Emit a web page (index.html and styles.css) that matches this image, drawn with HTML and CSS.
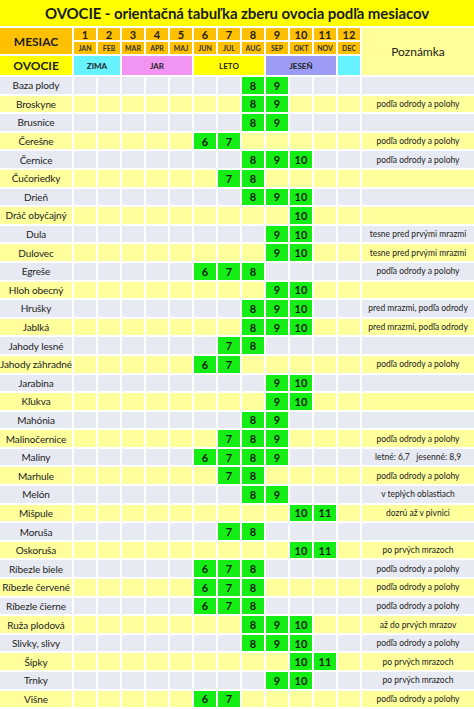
FILE: index.html
```html
<!DOCTYPE html>
<html lang="sk">
<head>
<meta charset="utf-8">
<title>Ovocie - tabuľka zberu</title>
<link rel="stylesheet" href="styles.css">
</head>
<body>
<div class="page">
  <h1 class="title">OVOCIE - orientačná tabuľka zberu ovocia podľa mesiacov</h1>
  <div class="head">
    <div class="mesiac">MESIAC</div>
    <div class="num">1</div><div class="num">2</div><div class="num">3</div><div class="num">4</div><div class="num">5</div><div class="num">6</div><div class="num">7</div><div class="num">8</div><div class="num">9</div><div class="num">10</div><div class="num">11</div><div class="num">12</div>
    <div class="pozn">Poznámka</div>
    <div class="abbr">JAN</div><div class="abbr">FEB</div><div class="abbr">MAR</div><div class="abbr">APR</div><div class="abbr">MAJ</div><div class="abbr">JUN</div><div class="abbr">JUL</div><div class="abbr">AUG</div><div class="abbr">SEP</div><div class="abbr">OKT</div><div class="abbr">NOV</div><div class="abbr">DEC</div>
    <div class="ovocie">OVOCIE</div>
    <div class="season zima">ZIMA</div>
    <div class="season jar">JAR</div>
    <div class="season leto">LETO</div>
    <div class="season jesen">JESEŇ</div>
    <div class="season dec"></div>
  </div>
  <div class="body">
    <div class="row"><span class="name">Baza plody</span><i></i><i></i><i></i><i></i><i></i><i></i><i></i><b>8</b><b>9</b><i></i><i></i><i></i><span class="note"></span></div>
    <div class="row"><span class="name">Broskyne</span><i></i><i></i><i></i><i></i><i></i><i></i><i></i><b>8</b><b>9</b><i></i><i></i><i></i><span class="note">podľa odrody a polohy</span></div>
    <div class="row"><span class="name">Brusnice</span><i></i><i></i><i></i><i></i><i></i><i></i><i></i><b>8</b><b>9</b><i></i><i></i><i></i><span class="note"></span></div>
    <div class="row"><span class="name">Čerešne</span><i></i><i></i><i></i><i></i><i></i><b>6</b><b>7</b><i></i><i></i><i></i><i></i><i></i><span class="note">podľa odrody a polohy</span></div>
    <div class="row"><span class="name">Černice</span><i></i><i></i><i></i><i></i><i></i><i></i><i></i><b>8</b><b>9</b><b>10</b><i></i><i></i><span class="note">podľa odrody a polohy</span></div>
    <div class="row"><span class="name">Čučoriedky</span><i></i><i></i><i></i><i></i><i></i><i></i><b>7</b><b>8</b><i></i><i></i><i></i><i></i><span class="note"></span></div>
    <div class="row"><span class="name">Drieň</span><i></i><i></i><i></i><i></i><i></i><i></i><i></i><b>8</b><b>9</b><b>10</b><i></i><i></i><span class="note"></span></div>
    <div class="row"><span class="name">Dráč obyčajný</span><i></i><i></i><i></i><i></i><i></i><i></i><i></i><i></i><i></i><b>10</b><i></i><i></i><span class="note"></span></div>
    <div class="row"><span class="name">Dula</span><i></i><i></i><i></i><i></i><i></i><i></i><i></i><i></i><b>9</b><b>10</b><i></i><i></i><span class="note">tesne pred prvými mrazmi</span></div>
    <div class="row"><span class="name">Dulovec</span><i></i><i></i><i></i><i></i><i></i><i></i><i></i><i></i><b>9</b><b>10</b><i></i><i></i><span class="note">tesne pred prvými mrazmi</span></div>
    <div class="row"><span class="name">Egreše</span><i></i><i></i><i></i><i></i><i></i><b>6</b><b>7</b><b>8</b><i></i><i></i><i></i><i></i><span class="note">podľa odrody a polohy</span></div>
    <div class="row"><span class="name">Hloh obecný</span><i></i><i></i><i></i><i></i><i></i><i></i><i></i><i></i><b>9</b><b>10</b><i></i><i></i><span class="note"></span></div>
    <div class="row"><span class="name">Hrušky</span><i></i><i></i><i></i><i></i><i></i><i></i><i></i><b>8</b><b>9</b><b>10</b><i></i><i></i><span class="note">pred mrazmi, podľa odrody</span></div>
    <div class="row"><span class="name">Jablká</span><i></i><i></i><i></i><i></i><i></i><i></i><i></i><b>8</b><b>9</b><b>10</b><i></i><i></i><span class="note">pred mrazmi, podľa odrody</span></div>
    <div class="row"><span class="name">Jahody lesné</span><i></i><i></i><i></i><i></i><i></i><i></i><b>7</b><b>8</b><i></i><i></i><i></i><i></i><span class="note"></span></div>
    <div class="row"><span class="name">Jahody záhradné</span><i></i><i></i><i></i><i></i><i></i><b>6</b><b>7</b><i></i><i></i><i></i><i></i><i></i><span class="note">podľa odrody a polohy</span></div>
    <div class="row"><span class="name">Jarabina</span><i></i><i></i><i></i><i></i><i></i><i></i><i></i><i></i><b>9</b><b>10</b><i></i><i></i><span class="note"></span></div>
    <div class="row"><span class="name">Kľukva</span><i></i><i></i><i></i><i></i><i></i><i></i><i></i><i></i><b>9</b><b>10</b><i></i><i></i><span class="note"></span></div>
    <div class="row"><span class="name">Mahónia</span><i></i><i></i><i></i><i></i><i></i><i></i><i></i><b>8</b><b>9</b><i></i><i></i><i></i><span class="note"></span></div>
    <div class="row"><span class="name">Malinočernice</span><i></i><i></i><i></i><i></i><i></i><i></i><b>7</b><b>8</b><b>9</b><i></i><i></i><i></i><span class="note">podľa odrody a polohy</span></div>
    <div class="row"><span class="name">Maliny</span><i></i><i></i><i></i><i></i><i></i><b>6</b><b>7</b><b>8</b><b>9</b><i></i><i></i><i></i><span class="note">letné: 6,7   jesenné: 8,9</span></div>
    <div class="row"><span class="name">Marhule</span><i></i><i></i><i></i><i></i><i></i><i></i><b>7</b><b>8</b><i></i><i></i><i></i><i></i><span class="note">podľa odrody a polohy</span></div>
    <div class="row"><span class="name">Melón</span><i></i><i></i><i></i><i></i><i></i><i></i><i></i><b>8</b><b>9</b><i></i><i></i><i></i><span class="note">v teplých oblastiach</span></div>
    <div class="row"><span class="name">Mišpule</span><i></i><i></i><i></i><i></i><i></i><i></i><i></i><i></i><i></i><b>10</b><b>11</b><i></i><span class="note">dozrú až v pivnici</span></div>
    <div class="row"><span class="name">Moruša</span><i></i><i></i><i></i><i></i><i></i><i></i><b>7</b><b>8</b><i></i><i></i><i></i><i></i><span class="note"></span></div>
    <div class="row"><span class="name">Oskoruša</span><i></i><i></i><i></i><i></i><i></i><i></i><i></i><i></i><i></i><b>10</b><b>11</b><i></i><span class="note">po prvých mrazoch</span></div>
    <div class="row"><span class="name">Ríbezle biele</span><i></i><i></i><i></i><i></i><i></i><b>6</b><b>7</b><b>8</b><i></i><i></i><i></i><i></i><span class="note">podľa odrody a polohy</span></div>
    <div class="row"><span class="name">Ríbezle červené</span><i></i><i></i><i></i><i></i><i></i><b>6</b><b>7</b><b>8</b><i></i><i></i><i></i><i></i><span class="note">podľa odrody a polohy</span></div>
    <div class="row"><span class="name">Ríbezle čierne</span><i></i><i></i><i></i><i></i><i></i><b>6</b><b>7</b><b>8</b><i></i><i></i><i></i><i></i><span class="note">podľa odrody a polohy</span></div>
    <div class="row"><span class="name">Ruža plodová</span><i></i><i></i><i></i><i></i><i></i><i></i><i></i><b>8</b><b>9</b><b>10</b><i></i><i></i><span class="note">až do prvých mrazov</span></div>
    <div class="row"><span class="name">Slivky, slivy</span><i></i><i></i><i></i><i></i><i></i><i></i><i></i><b>8</b><b>9</b><b>10</b><i></i><i></i><span class="note">podľa odrody a polohy</span></div>
    <div class="row"><span class="name">Šípky</span><i></i><i></i><i></i><i></i><i></i><i></i><i></i><i></i><i></i><b>10</b><b>11</b><i></i><span class="note">po prvých mrazoch</span></div>
    <div class="row"><span class="name">Trnky</span><i></i><i></i><i></i><i></i><i></i><i></i><i></i><i></i><b>9</b><b>10</b><i></i><i></i><span class="note">po prvých mrazoch</span></div>
    <div class="row"><span class="name">Višne</span><i></i><i></i><i></i><i></i><i></i><b>6</b><b>7</b><i></i><i></i><i></i><i></i><i></i><span class="note">podľa odrody a polohy</span></div>
  </div>
</div>
</body>
</html>
```
FILE: styles.css
```css
html, body {
  margin: 0;
  padding: 0;
  background: #ffffff;
}

body {
  font-family: "Lato", "Open Sans", sans-serif;
  color: #222222;
}

.page {
  width: 474px;
  display: flex;
  flex-direction: column;
  gap: 2px;
}

.title {
  margin: 0;
  height: 26px;
  background: #ffff00;
  font-size: 15px;
  letter-spacing: -0.1px;
  font-weight: 700;
  line-height: 27px;
  text-align: center;
  color: #1c1c1c;
}

.head {
  display: grid;
  grid-template-columns: 72px repeat(12, 22px) 1fr;
  grid-template-rows: 12px 12px 19px;
  gap: 2px;
}

.head > div {
  display: flex;
  align-items: center;
  justify-content: center;
  font-weight: 700;
}

.mesiac {
  grid-column: 1;
  grid-row: 1 / span 2;
  background: #ffc000;
  font-size: 12px;
}

.num {
  grid-row: 1;
  background: #ffc000;
  font-size: 11px;
}

.abbr {
  grid-row: 2;
  background: #ffc000;
  font-size: 7px;
  color: #333333;
}

.pozn {
  grid-column: 14;
  grid-row: 1 / span 3;
  background: #ffff99;
  font-size: 12px;
  font-weight: 400 !important;
}

.ovocie {
  grid-column: 1;
  grid-row: 3;
  background: #ffff00;
  font-size: 12px;
}

.season {
  grid-row: 3;
  font-size: 8px;
}

.zima { grid-column: 2 / span 2; background: #66f2ff; }
.jar { grid-column: 4 / span 3; background: #f294f2; }
.leto { grid-column: 7 / span 3; background: #ffff00; }
.jesen { grid-column: 10 / span 3; background: #9c9cf5; }
.dec { grid-column: 13; background: #66f2ff; }

.body {
  display: flex;
  flex-direction: column;
  gap: 2px;
}

.row {
  display: grid;
  grid-template-columns: 72px repeat(12, 22px) 1fr;
  height: 16.6px;
  gap: 2px;
}

.row > * {
  display: flex;
  align-items: center;
  justify-content: center;
  font-style: normal;
  white-space: nowrap;
  overflow: visible;
}

.row:nth-child(odd) > * { background: #e7eaf2; }
.row:nth-child(even) > * { background: #ffff9c; }

.name {
  font-size: 10px;
  letter-spacing: -0.1px;
}

.note {
  font-size: 8.5px;
  white-space: pre !important;
}

.row > b {
  background: #14ee14 !important;
  font-size: 11px;
  font-weight: 700;
  color: #1a1a1a;
}
```
